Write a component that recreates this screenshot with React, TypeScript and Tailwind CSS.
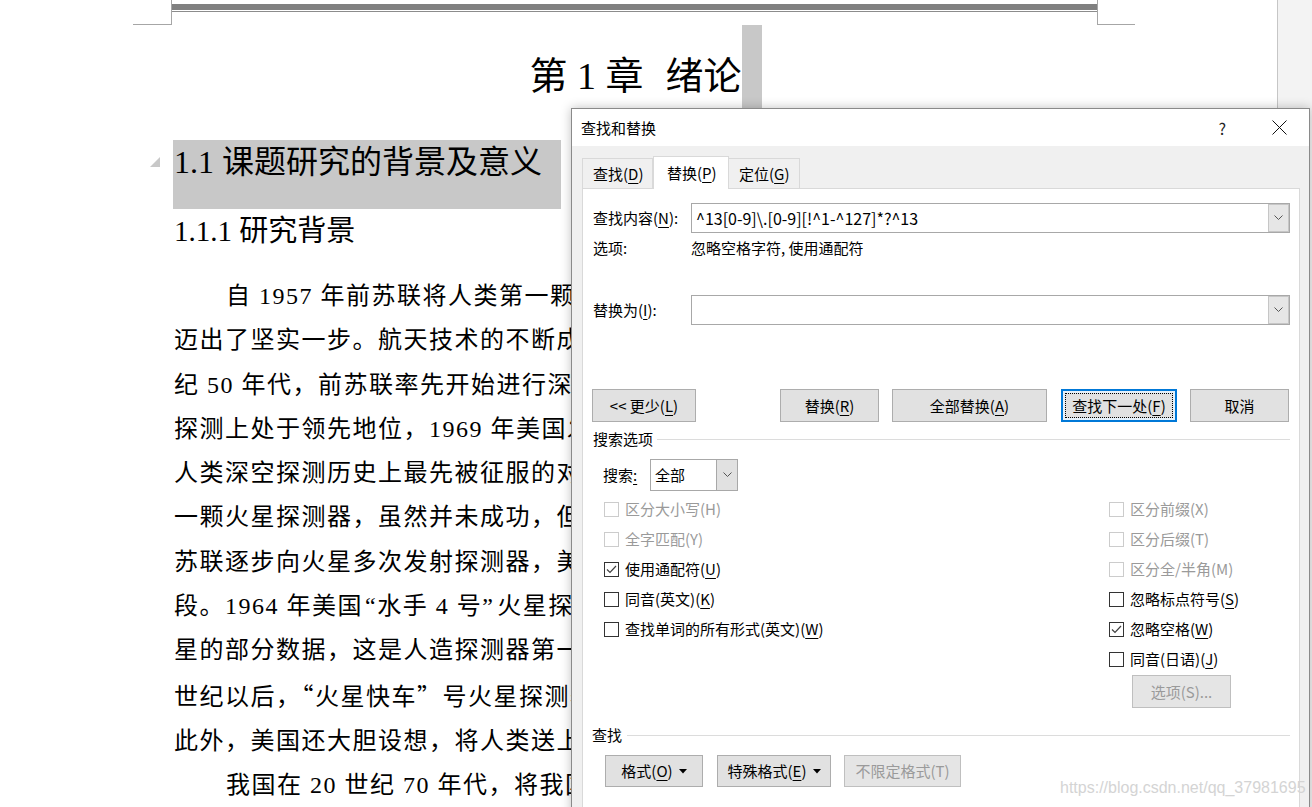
import React from "react";

const docFont = { fontFamily: '"Liberation Serif","Noto Sans CJK SC",serif' };
const uiFont = { fontFamily: '"Noto Sans CJK SC","Noto Sans",sans-serif' };

function U({ children }: { children: React.ReactNode }) {
  return <span className="underline underline-offset-[3px] decoration-1">{children}</span>;
}

function Q({ children }: { children: React.ReactNode }) {
  return <span style={{ fontFamily: '"Noto Sans CJK SC",sans-serif' }}>{children}</span>;
}

function Chevron() {
  return (
    <svg width="9" height="6" viewBox="0 0 9 6" fill="none">
      <polyline points="0.5,0.5 4.5,4.5 8.5,0.5" stroke="#555" strokeWidth="1" />
    </svg>
  );
}

function Box({ checked, disabled }: { checked?: boolean; disabled?: boolean }) {
  return (
    <span
      className={
        disabled
          ? "w-[15px] h-[15px] border border-[#cccccc] bg-white flex items-center justify-center shrink-0"
          : "w-[15px] h-[15px] border border-[#333333] bg-white flex items-center justify-center shrink-0"
      }
    >
      {checked && (
        <svg width="13" height="13" viewBox="0 0 13 13" fill="none">
          <polyline points="2,6.5 5,9.5 11,3" stroke="#404040" strokeWidth="1.2" />
        </svg>
      )}
    </span>
  );
}

function Check({
  label,
  checked,
  disabled,
}: {
  label: React.ReactNode;
  checked?: boolean;
  disabled?: boolean;
}) {
  return (
    <div className="h-[30px] flex items-center">
      <Box checked={checked} disabled={disabled} />
      <span
        className={
          disabled
            ? "ml-[6px] text-[15px] leading-[20px] text-[#9a9a9a] whitespace-nowrap"
            : "ml-[6px] text-[15px] leading-[20px] text-black whitespace-nowrap"
        }
      >
        {label}
      </span>
    </div>
  );
}

function Btn({
  w,
  children,
  className = "",
}: {
  w: string;
  children: React.ReactNode;
  className?: string;
}) {
  return (
    <div
      className={`${w} h-full bg-[#e1e1e1] border border-[#adadad] flex items-center justify-center text-[15px] leading-[20px] text-black whitespace-nowrap ${className}`}
    >
      {children}
    </div>
  );
}

function Caret() {
  return (
    <svg width="8" height="5" viewBox="0 0 8 5" className="ml-[6px]">
      <polygon points="0,0 8,0 4,4.5" fill="#000" />
    </svg>
  );
}

const bodyLines: { indent?: boolean; text: React.ReactNode }[] = [
  { indent: true, text: "自 1957 年前苏联将人类第一颗人造地球卫星送入太空，人类在探索宇宙的道路上" },
  { text: "迈出了坚实一步。航天技术的不断成熟，使人类深空探测活动逐渐成为可能。在 20 世" },
  { text: "纪 50 年代，前苏联率先开始进行深空探测活动，并在相当长的一段时间内在深空" },
  { text: "探测上处于领先地位，1969 年美国发射的阿波罗 11 号实现了人类登月，月球成为" },
  { text: "人类深空探测历史上最先被征服的对象。1960 年，前苏联向火星发射了人类历史上第" },
  { text: "一颗火星探测器，虽然并未成功，但开启了人类探测火星的序幕。此后，美国与前" },
  { text: "苏联逐步向火星多次发射探测器，美国的火星探测任务逐渐进入成熟稳定的发展阶" },
  {
    text: (
      <>
        段。1964 年美国<span className="pl-[2px]">“</span>水手 4 号<span className="pr-[3px]">”</span>火星探测器成功飞越火星，并传回了第一批有关火
      </>
    ),
  },
  { text: "星的部分数据，这是人造探测器第一次成功获取火星的近距离观测资料。进入 21" },
  {
    text: (
      <>
        世纪以后，<Q>“</Q>火星快车<Q>”</Q>号火星探测器、<Q>“</Q>好奇<Q>”</Q>号火星车等相继成功着陆火星。
      </>
    ),
  },
  { text: "此外，美国还大胆设想，将人类送上火星并建立长期的载人基地。" },
  { indent: true, text: "我国在 20 世纪 70 年代，将我国第一颗人造地球卫星东方红一号送入太空。" },
];

export default function App() {
  return (
    <div className="relative w-[1312px] h-[807px] overflow-hidden bg-white">
      <div className="flex h-full">
        {/* Document page */}
        <div className="w-[1277px] h-full flex flex-col text-black" style={docFont}>
          {/* top marks and bar */}
          <div className="flex h-[25px] shrink-0">
            <div className="ml-[133px] w-[39px] h-[25px] border-b border-r border-[#a6a6a6]" />
            <div className="w-[925px] flex flex-col">
              <div className="mt-[4px] h-[6px] bg-[#808080]" />
              <div className="mt-[1px] h-px bg-[#8c8c8c]" />
            </div>
            <div className="w-[38px] h-[25px] border-b border-l border-[#a6a6a6]" />
          </div>

          {/* Chapter title */}
          <div className="ml-[174px] w-[923px] h-[83px] flex justify-center shrink-0">
            <div className="w-[20px]" />
            <div className="pt-[32px] text-[38px] leading-[38px] whitespace-nowrap">
              第 1 章<span className="ml-[22px]">绪论</span>
            </div>
            <div className="w-[20px] h-[83px] bg-[#c8c8c8]" />
          </div>

          {/* Heading 1.1 */}
          <div className="mt-[32px] flex items-start shrink-0">
            <div className="w-[150px]" />
            <svg width="10" height="10" viewBox="0 0 10 10" className="mt-[17px]">
              <polygon points="10,0 10,10 0,10" fill="#c8c8c8" />
            </svg>
            <div className="w-[13px]" />
            <div className="w-[388px] h-[69px] bg-[#c8c8c8] text-[32px] leading-[44px] whitespace-nowrap pl-px">
              1.1 课题研究的背景及意义
            </div>
          </div>

          {/* Heading 1.1.1 */}
          <div className="mt-[2px] ml-[174px] text-[29px] leading-[40px] whitespace-nowrap shrink-0">
            1.1.1 研究背景
          </div>

          {/* Body */}
          <div className="mt-[23px] ml-[174px] w-[923px] overflow-hidden text-[24px] leading-[44.3px] tracking-[1.5px]">
            {bodyLines.map((l, i) => (
              <div key={i} className={l.indent ? "pl-[52px] whitespace-nowrap" : "whitespace-nowrap"}>
                {l.text}
              </div>
            ))}
          </div>
        </div>
        {/* right gray strip */}
        <div className="flex-1 h-full bg-[#f3f3f3] border-l border-[#c6c6c6]" />
      </div>

      {/* Find & Replace dialog */}
      <div
        className="absolute left-[571px] top-[108px] w-[739px] h-[720px] bg-[#f0f0f0] border border-[#8a8a8a] shadow-[0_0_10px_rgba(0,0,0,0.25)] flex flex-col text-black"
        style={uiFont}
      >
        {/* title bar */}
        <div className="h-[37px] bg-white flex items-center pl-[9px] shrink-0">
          <span className="text-[15px] leading-[20px]">查找和替换</span>
          <div className="ml-auto flex items-center mr-[22px]">
            <span className="text-[16px] leading-[20px] text-[#222]">?</span>
            <svg width="15" height="15" viewBox="0 0 15 15" className="ml-[46px]">
              <line x1="0.5" y1="0.5" x2="14.5" y2="14.5" stroke="#111" strokeWidth="1" />
              <line x1="14.5" y1="0.5" x2="0.5" y2="14.5" stroke="#111" strokeWidth="1" />
            </svg>
          </div>
        </div>

        {/* tabs */}
        <div className="pt-[10px] pl-[10px] flex items-end h-[42px] shrink-0">
          <div className="w-[71px] h-[30px] border border-b-0 border-[#d9d9d9] bg-[#f0f0f0] flex items-center pl-[10px] text-[15px] leading-[20px]">
            查找(<U>D</U>)
          </div>
          <div className="relative z-10 -mb-px w-[76px] h-[33px] border border-b-0 border-[#d9d9d9] bg-white flex items-center pl-[13px] text-[15px] leading-[20px]">
            替换(<U>P</U>)
          </div>
          <div className="w-[71px] h-[30px] border border-b-0 border-l-0 border-[#d9d9d9] bg-[#f0f0f0] flex items-center pl-[10px] text-[15px] leading-[20px]">
            定位(<U>G</U>)
          </div>
        </div>

        {/* panel */}
        <div className="ml-[10px] w-[718px] flex-1 bg-white border border-[#d9d9d9] pl-[10px] pr-[9px] flex flex-col">
          {/* find what */}
          <div className="mt-[14px] h-[30px] flex items-center">
            <div className="w-[98px] text-[15px] leading-[20px] whitespace-nowrap">
              查找内容(<U>N</U>):
            </div>
            <div className="flex-1 h-[30px] border border-[#a8a8a8] flex items-stretch">
              <div className="flex-1 flex items-center pl-[4px] text-[16px] leading-[20px] whitespace-nowrap">
                ^13[0-9]\.[0-9][!^1-^127]*?^13
              </div>
              <div className="w-[21px] bg-[#e6e6e6] border border-[#c6c6c6] flex items-center justify-center">
                <Chevron />
              </div>
            </div>
          </div>
          <div className="mt-[5px] h-[20px] flex items-center text-[15px] leading-[20px]">
            <div className="w-[98px]">选项:</div>
            <div>忽略空格字符, 使用通配符</div>
          </div>

          {/* replace with */}
          <div className="mt-[37px] h-[30px] flex items-center">
            <div className="w-[98px] text-[15px] leading-[20px] whitespace-nowrap">
              替换为(<U>I</U>):
            </div>
            <div className="flex-1 h-[30px] border border-[#a8a8a8] flex items-stretch">
              <div className="flex-1" />
              <div className="w-[21px] bg-[#e6e6e6] border border-[#c6c6c6] flex items-center justify-center">
                <Chevron />
              </div>
            </div>
          </div>

          {/* main buttons */}
          <div className="mt-[64px] h-[33px] flex -ml-px">
            <Btn w="w-[104px]">
              &lt;&lt;&nbsp;更少(<U>L</U>)
            </Btn>
            <Btn w="w-[99px]" className="ml-[84px]">
              替换(<U>R</U>)
            </Btn>
            <Btn w="w-[155px]" className="ml-[13px]">
              全部替换(<U>A</U>)
            </Btn>
            <div className="ml-[14px] w-[116px] h-full bg-[#e5f1fb] border-2 border-[#0078d7] p-[2px]">
              <div className="w-full h-full border border-dotted border-black flex items-center justify-center text-[15px] leading-[20px] whitespace-nowrap bg-[#e1e1e1]">
                查找下一处(<U>F</U>)
              </div>
            </div>
            <Btn w="w-[99px]" className="ml-[13px]">
              取消
            </Btn>
          </div>

          {/* search options header */}
          <div className="mt-[7px] h-[20px] flex items-center">
            <span className="text-[15px] leading-[20px] whitespace-nowrap">搜索选项</span>
            <div className="flex-1 h-px bg-[#dcdcdc] ml-[4px]" />
          </div>

          {/* search direction */}
          <div className="mt-[10px] h-[32px] flex items-center pl-[10px]">
            <div className="w-[47px] text-[15px] leading-[20px] whitespace-nowrap">
              搜索<U>:</U>
            </div>
            <div className="w-[88px] h-[32px] border border-[#a8a8a8] flex items-stretch">
              <div className="flex-1 flex items-center pl-[4px] text-[15px] leading-[20px]">全部</div>
              <div className="w-[21px] bg-[#e1e1e1] border-l border-[#a8a8a8] flex items-center justify-center">
                <Chevron />
              </div>
            </div>
          </div>

          {/* checkbox columns */}
          <div className="mt-[3px] flex">
            <div className="ml-[11px] flex flex-col">
              <Check label="区分大小写(H)" disabled />
              <Check label="全字匹配(Y)" disabled />
              <Check label={<>使用通配符(<U>U</U>)</>} checked />
              <Check label={<>同音(英文)(<U>K</U>)</>} />
              <Check label={<>查找单词的所有形式(英文)(<U>W</U>)</>} />
            </div>
            <div className="ml-auto w-[181px] flex flex-col">
              <Check label="区分前缀(X)" disabled />
              <Check label="区分后缀(T)" disabled />
              <Check label="区分全/半角(M)" disabled />
              <Check label={<>忽略标点符号(<U>S</U>)</>} />
              <Check label={<>忽略空格(<U>W</U>)</>} checked />
              <Check label={<>同音(日语)(<U>J</U>)</>} />
              <div className="mt-[1px] ml-[23px] w-[99px] h-[33px] bg-[#e5e5e5] border border-[#bfbfbf] flex items-center justify-center text-[15px] leading-[20px] text-[#9a9a9a]">
                选项(S)...
              </div>
            </div>
          </div>

          {/* find header */}
          <div className="mt-[17px] h-[20px] flex items-center -ml-px">
            <span className="text-[15px] leading-[20px] whitespace-nowrap">查找</span>
            <div className="flex-1 h-px bg-[#dcdcdc] ml-[5px]" />
          </div>

          {/* format buttons */}
          <div className="mt-[10px] h-[32px] flex pl-[12px]">
            <Btn w="w-[98px]">
              格式(<U>O</U>)
              <Caret />
            </Btn>
            <Btn w="w-[114px]" className="ml-[14px]">
              特殊格式(<U>E</U>)
              <Caret />
            </Btn>
            <div className="ml-[13px] w-[117px] h-full bg-[#e5e5e5] border border-[#bfbfbf] flex items-center justify-center text-[15px] leading-[20px] text-[#9a9a9a] whitespace-nowrap">
              不限定格式(T)
            </div>
          </div>
        </div>
      </div>

      {/* watermark */}
      <div
        className="absolute left-[1060px] top-[778px] text-[16px] leading-[20px] text-[#d4d4d4] whitespace-nowrap"
        style={{ fontFamily: '"Liberation Sans",Arial,sans-serif' }}
      >
        https://blog.csdn.net/qq_37981695
      </div>
    </div>
  );
}
